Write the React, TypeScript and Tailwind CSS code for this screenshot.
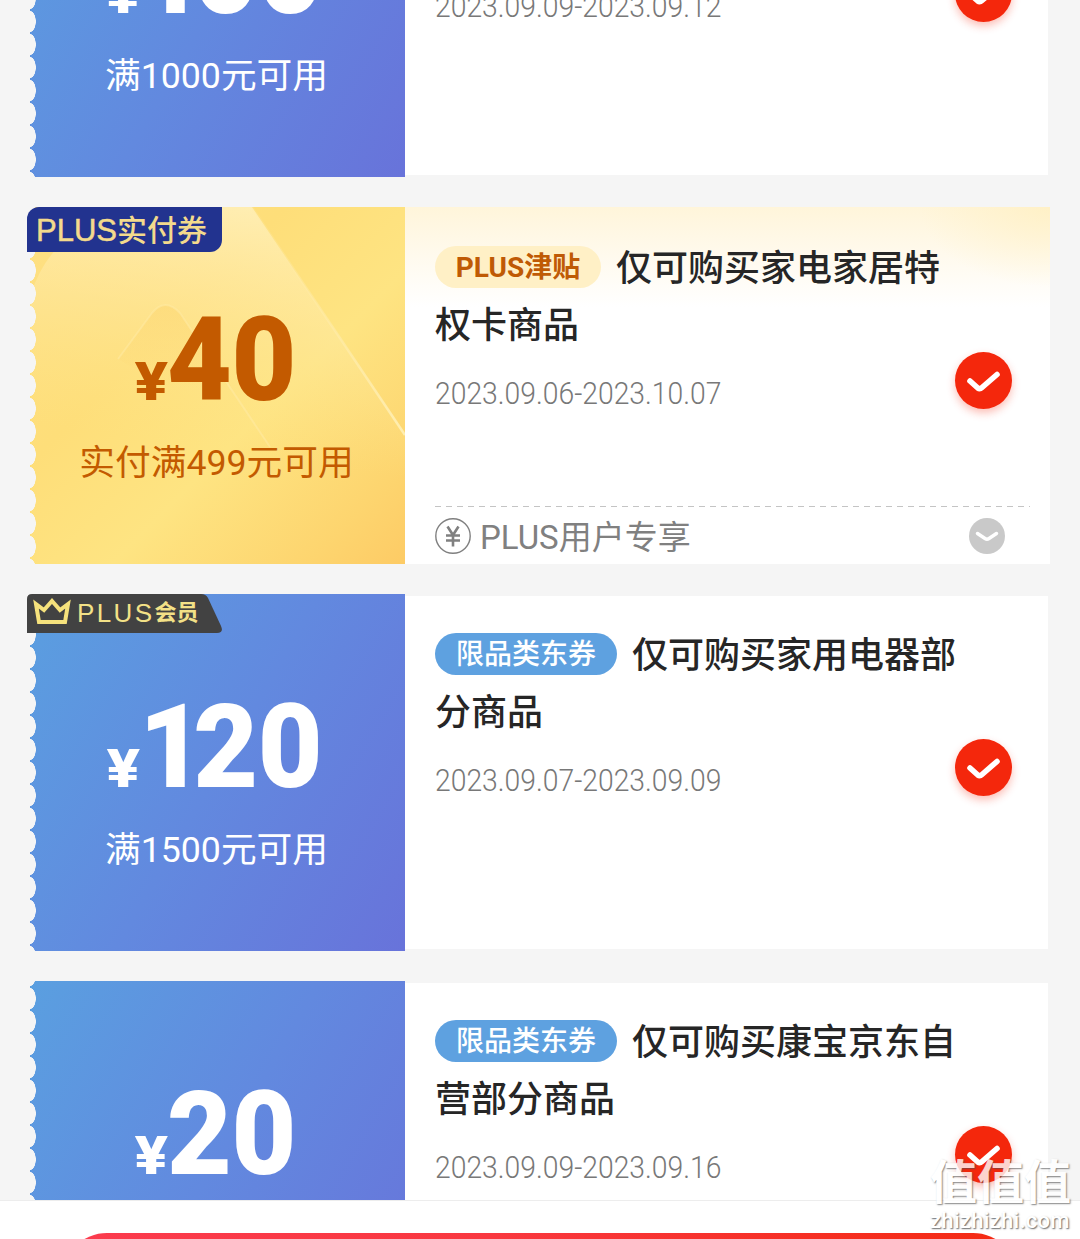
import React from "react";

type Coupon = {
  amount: string;
  condition: string;
  tag: string;
  title: string;
  date: string;
  kind: "blue" | "gold";
  badge?: "pay" | "member";
};

const coupons: Coupon[] = [
  { amount: "100", condition: "满1000元可用", tag: "限品类东券", title: "仅可购买家用电器部分商品", date: "2023.09.09-2023.09.12", kind: "blue" },
  { amount: "40", condition: "实付满499元可用", tag: "PLUS津贴", title: "仅可购买家电家居特权卡商品", date: "2023.09.06-2023.10.07", kind: "gold", badge: "pay" },
  { amount: "120", condition: "满1500元可用", tag: "限品类东券", title: "仅可购买家用电器部分商品", date: "2023.09.07-2023.09.09", kind: "blue", badge: "member" },
  { amount: "20", condition: "满199元可用", tag: "限品类东券", title: "仅可购买康宝京东自营部分商品", date: "2023.09.09-2023.09.16", kind: "blue" },
];

function PayBadge() {
  return (
    <div className="absolute -left-[3px] top-0 flex h-[45px] w-[195px] items-center rounded-tl-[12px] rounded-br-[12px] bg-[#22338f] pl-[9px] text-[30px] leading-none font-medium whitespace-nowrap text-[#f3da8c]">
      <span className="mt-[2px] font-['Liberation_Sans'] text-[31px] font-normal [-webkit-text-stroke:0.5px_#f3da8c]">PLUS</span>
      <span className="mt-[3px]">实付券</span>
    </div>
  );
}

function MemberBadge() {
  return (
    <div className="absolute -left-[3px] top-0 h-[39px] w-[196px]">
      <svg className="absolute inset-0" width="196" height="39" viewBox="0 0 196 39">
        <path d="M0 39V5Q0 0 5 0H174Q179 0 181 4L194 32Q197 39 190 39Z" fill="#424242" />
        <path d="M9 10L17 16L25 7L33 16L41 10L38 28H12Z" fill="none" stroke="#f6e27c" strokeWidth="4" />
      </svg>
      <div className="absolute left-[50px] top-0 flex h-[37px] items-center text-[26px] leading-none whitespace-nowrap text-[#f3e187]">
        <span className="font-['Liberation_Sans'] text-[26px] tracking-[2.4px]">PLUS</span>
        <span className="text-[22px] font-bold">会员</span>
      </div>
    </div>
  );
}

function GoldShine() {
  return (
    <svg className="absolute inset-0" width="375" height="357" viewBox="0 0 375 357">
      <defs>
        <linearGradient id="peak" gradientUnits="userSpaceOnUse" x1="210" y1="0" x2="170" y2="270">
          <stop offset="0" stopColor="#fff0bb" stopOpacity="0.85" />
          <stop offset="0.45" stopColor="#ffe9a2" stopOpacity="0.45" />
          <stop offset="0.9" stopColor="#ffe58a" stopOpacity="0" />
        </linearGradient>
        <linearGradient id="ridge" x1="0" y1="0" x2="0" y2="1">
          <stop offset="0" stopColor="#ffe9a0" stopOpacity="0.2" />
          <stop offset="1" stopColor="#ffefb4" stopOpacity="0.95" />
        </linearGradient>
        <linearGradient id="hill" x1="0" y1="0" x2="0" y2="1">
          <stop offset="0" stopColor="#fdd873" stopOpacity="0.6" />
          <stop offset="0.6" stopColor="#fdda76" stopOpacity="0" />
        </linearGradient>
      </defs>
      <path d="M0 90Q12 50 40 30L60 0H222L375 228V357H0Z" fill="url(#peak)" />
      <path d="M222 0L375 228" stroke="url(#ridge)" strokeWidth="2.500" fill="none" />
      <path d="M88 152L122 106Q135 90 150 106L240 240Z" fill="url(#hill)" />
      <path d="M88 152L122 106Q135 90 150 106L240 240" stroke="#ffeba6" strokeOpacity="0.5" strokeWidth="2" fill="none" />
    </svg>
  );
}

function Amount({ value }: { value: string }) {
  const narrowStart = value.startsWith("1");
  return (
    <div className="relative mt-[94px] flex h-[118px] items-baseline justify-center leading-[118px]">
      <span className="w-[33px] font-[Inter] text-[52px] font-extrabold">
        <span className="inline-block origin-left scale-x-[1.15]">¥</span>
      </span>
      <span className="inline-block origin-left scale-x-[0.965] text-[116px] font-black tracking-[-0.5px]">
        {narrowStart ? (
          <>
            <span className="tracking-[-11px]">1</span>
            {value.slice(1)}
          </>
        ) : (
          value
        )}
      </span>
    </div>
  );
}

function CheckBadge({ gold }: { gold: boolean }) {
  return (
    <div
      className={
        gold
          ? "absolute left-[550px] top-[145px] size-[57px] rounded-full bg-[#f4270c] shadow-[0_4px_9px_rgba(244,39,12,0.3)]"
          : "absolute left-[550px] top-[143px] size-[57px] rounded-full bg-[#f4270c] shadow-[0_4px_9px_rgba(244,39,12,0.3)]"
      }
    >
      <svg width="57" height="57" viewBox="0 0 57 57" fill="none">
        <path d="M15 29L22.800 36Q24.800 37.600 27 35.500L42 22.500" stroke="#fff" strokeWidth="5.600" strokeLinecap="round" strokeLinejoin="round" />
      </svg>
    </div>
  );
}

function CouponCard({ c }: { c: Coupon }) {
  const gold = c.kind === "gold";
  return (
    <article className="flex h-[357px] shrink-0 items-center">
      <div
        className={
          gold
            ? "relative flex h-full w-[375px] flex-col items-center bg-[linear-gradient(135deg,#fee083_0%,#fede79_35%,#fee482_60%,#fdd56f_86%,#fdcb65_100%)] text-[#c35a00]"
            : "relative flex h-full w-[375px] flex-col items-center bg-[linear-gradient(120deg,#5a9fe0_0%,#6289df_50%,#6873da_100%)] text-white"
        }
      >
        {gold && <GoldShine />}
        <div className="absolute left-0 top-0 h-full w-[7px] bg-[radial-gradient(ellipse_6px_11px_at_0_50%,#f5f5f5_92%,transparent_100%)] bg-[length:7px_23px] bg-[position:0_6px]" />
        {c.badge === "pay" && <PayBadge />}
        {c.badge === "member" && <MemberBadge />}
        <Amount value={c.amount} />
        <p className="relative right-px mt-[18px] h-[52px] text-[35.7px] leading-[52px] whitespace-nowrap">{c.condition}</p>
      </div>
      <div
        className={
          gold
            ? "relative h-full w-[645px] bg-white bg-[radial-gradient(ellipse_130px_80px_at_100%_0%,rgba(255,238,188,0.65),transparent),linear-gradient(180deg,#fff5da_0%,#fffaee_14%,#ffffff_28%)] px-[30px] pt-[34px]"
            : "relative h-[353px] w-[643px] bg-white px-[30px] pt-[32px]"
        }
      >
        <h2 className="h-[114px] w-[530px] text-[36px] leading-[57px] font-medium text-[#262626]">
          <span
            className={
              gold
                ? "relative -top-[4px] mr-[15px] inline-flex h-[42px] w-[166px] items-center justify-center rounded-full bg-[#fff0c6] align-middle text-[28px] leading-none font-bold text-[#bf5a05]"
                : "relative -top-[4px] mr-[15px] inline-flex h-[42px] w-[182px] items-center justify-center rounded-full bg-[#5ea1e0] align-middle text-[28px] leading-none font-medium text-white"
            }
          >
            <span className="relative top-px">{c.tag}</span>
          </span>
          {c.title}
        </h2>
        <p className="mt-[18px] h-[40px] origin-left scale-x-[0.913] text-[31px] leading-[42px] font-light whitespace-nowrap text-[#787878]">{c.date}</p>
        <CheckBadge gold={gold} />
        {gold && (
          <div className="absolute inset-x-[30px] bottom-0 flex h-[56px] items-center text-[33px] text-[#808080]">
            <svg className="absolute left-0 -top-[3px]" width="595" height="2">
              <path d="M0 1.500H595" stroke="#c4c4c4" strokeWidth="1" strokeDasharray="6 5" />
            </svg>
            <svg width="36" height="36" viewBox="0 0 36 36" fill="none" stroke="#808080">
              <circle cx="18" cy="18" r="17.200" strokeWidth="1.400" />
              <path d="M12.500 8.500L18 17L23.500 8.500M18 17V28.500M11 17.500H25M11 22.500H25" strokeWidth="2.600" />
            </svg>
            <span className="relative top-[2px] ml-[9px] whitespace-nowrap">PLUS用户专享</span>
            <svg className="mr-[15px] ml-auto" width="36" height="36" viewBox="0 0 36 36" fill="none">
              <circle cx="18" cy="18" r="18" fill="#c9c9c9" />
              <path d="M8.500 15.500L16 20.500Q18 21.800 20 20.500L27.500 15.500" stroke="#fff" strokeWidth="3.500" strokeLinecap="round" />
            </svg>
          </div>
        )}
      </div>
    </article>
  );
}

export default function App() {
  return (
    <div className="relative flex h-[1239px] w-[1080px] flex-col overflow-hidden bg-[#f5f5f5] font-[Roboto,'Noto_Sans_CJK_SC',sans-serif]">
      <main className="h-[1200px] shrink-0 overflow-hidden">
        <div className="-mt-[180px] flex flex-col gap-[30px] pl-[30px]">
          {coupons.map((c, i) => (
            <CouponCard key={i} c={c} />
          ))}
        </div>
      </main>
      <footer className="h-[39px] shrink-0 overflow-hidden border-t border-[#ededed] bg-white px-[62px] pt-[32px]">
        <div className="h-[90px] rounded-full bg-[linear-gradient(90deg,#fb3b4e_0%,#f93840_45%,#f42a12_100%)]" />
      </footer>
      <div className="absolute left-[930px] top-[1155px] flex w-[142px] flex-col whitespace-nowrap text-white [text-shadow:1px_1px_1.5px_rgba(80,80,80,0.85)]">
        <span className="text-[47px] leading-[56px] font-bold opacity-80">值值值</span>
        <span className="text-[22px] leading-[20px] font-medium tracking-[0.3px]">zhizhizhi.com</span>
      </div>
    </div>
  );
}
